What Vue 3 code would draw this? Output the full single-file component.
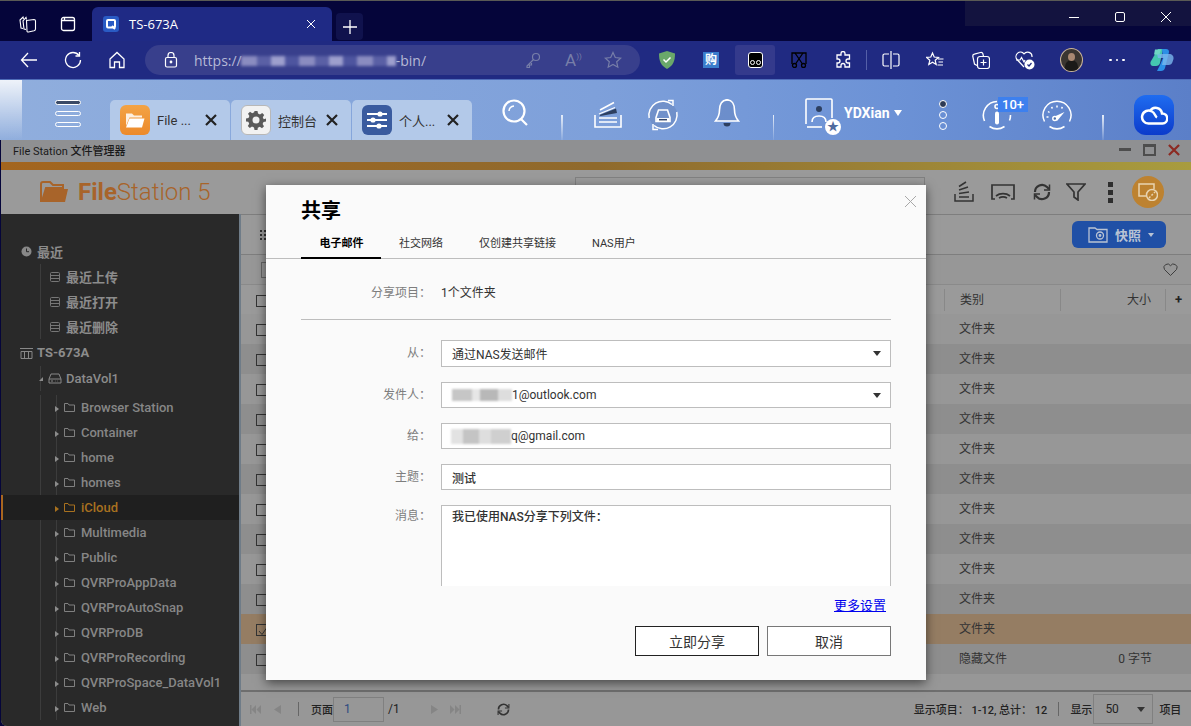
<script setup>
const tree = [
  { label: '最近', kind: 'root', icon: 'clock' },
  { label: '最近上传', kind: 'sub', icon: 'list' },
  { label: '最近打开', kind: 'sub', icon: 'list' },
  { label: '最近删除', kind: 'sub', icon: 'list' },
  { label: 'TS-673A', kind: 'root nas', icon: 'nas' },
  { label: 'DataVol1', kind: 'vol', icon: 'disk' },
]
const folders = ['Browser Station', 'Container', 'home', 'homes', 'iCloud', 'Multimedia', 'Public', 'QVRProAppData', 'QVRProAutoSnap', 'QVRProDB', 'QVRProRecording', 'QVRProSpace_DataVol1', 'Web']
const rows = Array.from({ length: 12 }, (_, i) => ({
  type: i === 11 ? '隐藏文件' : '文件夹',
  size: i === 11 ? '0 字节' : '',
  checked: i === 10,
}))
</script>

<template>
  <div class="screen">
    <!-- browser chrome -->
    <div class="tabstrip">
      <div class="strip-btn">
        <svg width="20" height="20" viewBox="0 0 20 20" fill="none" stroke="#fff" stroke-width="1.100"><path d="M5 14.500 3 14 2 6l3-3 .5 2"/><path d="M8 15.500 6 15 5 7l3-3.500 .5 2"/><path d="M8.500 6.500 16 5.500c1 0 1.500.5 1.500 1.500v8c0 1-.5 1.500-1.500 1.800l-5.500 1.200c-1 .2-1.500-.3-1.500-1z"/></svg>
      </div>
      <div class="strip-btn">
        <svg width="18" height="18" viewBox="0 0 18 18" fill="none" stroke="#fff" stroke-width="1.300"><rect x="2.500" y="2.500" width="13" height="13" rx="2"/><path d="M2.500 5.500h13M5.500 2.500v3"/></svg>
      </div>
      <div class="tab-active">
        <span class="favicon">
          <svg width="12" height="12" viewBox="0 0 12 12" fill="none" stroke="#fff" stroke-width="2"><rect x="2" y="2" width="8" height="7.500" rx="1"/><path d="m7 8 3 3"/></svg>
        </span>
        <span class="tab-title">TS-673A</span>
        <svg class="tab-x" width="10" height="10" viewBox="0 0 10 10" stroke="#fff" stroke-width="1"><path d="m1 1 8 8M9 1l-8 8"/></svg>
      </div>
      <div class="new-tab">
        <svg width="14" height="14" viewBox="0 0 14 14" stroke="#fff" stroke-width="1.300"><path d="M7 0v14M0 7h14"/></svg>
      </div>
      <div class="win-btns">
        <svg width="12" height="12" viewBox="0 0 12 12" stroke="#fff" stroke-width="1"><path d="M1 6.500h10"/></svg>
        <svg width="12" height="12" viewBox="0 0 12 12" fill="none" stroke="#fff" stroke-width="1"><rect x="1.500" y="1.500" width="9" height="9" rx="1.500"/></svg>
        <svg width="12" height="12" viewBox="0 0 12 12" stroke="#fff" stroke-width="1"><path d="m1 1 10 10M11 1 1 11"/></svg>
      </div>
    </div>

    <div class="navbar">
      <div class="nav-btn">
        <svg width="18" height="18" viewBox="0 0 18 18" fill="none" stroke="#fff" stroke-width="1.300"><path d="M17 9H1.500M8 2 1.500 9 8 16"/></svg>
      </div>
      <div class="nav-btn">
        <svg width="18" height="18" viewBox="0 0 18 18" fill="none" stroke="#fff" stroke-width="1.300"><path d="M15 4.500A7.500 7.500 0 1 0 16.500 9"/><path d="M15.500 1v4h-4"/></svg>
      </div>
      <div class="nav-btn">
        <svg width="18" height="18" viewBox="0 0 18 18" fill="none" stroke="#fff" stroke-width="1.300"><path d="M2 8 9 1.500 16 8v8.500h-4.500V11h-5v5.500H2z"/></svg>
      </div>
      <div class="url-pill">
        <svg class="lock" width="14" height="16" viewBox="0 0 14 16" fill="none" stroke="#fff" stroke-width="1.200"><rect x="1.500" y="5.500" width="11" height="9.500" rx="1.500"/><path d="M4 5.500V3.500a3 3 0 0 1 6 0v2"/><circle cx="7" cy="10" r=".8" fill="#fff"/></svg>
        <span class="url">https://</span><span class="url-blur"></span><span class="url">-bin/</span>
        <svg class="pill-a" width="16" height="16" viewBox="0 0 16 16" fill="none" stroke="#777ea8" stroke-width="1.200"><circle cx="11" cy="5" r="3.500"/><path d="M8.500 7.500 2 14v1.500h2.500V13h2v-2"/></svg>
        <span class="read-a">A<sup>))</sup></span>
        <svg class="pill-star" width="18" height="18" viewBox="0 0 18 18" fill="none" stroke="#777ea8" stroke-width="1.200"><path d="m9 1.500 2.300 5 5.400.6-4 3.700 1.100 5.400L9 13.500l-4.800 2.700 1.100-5.400-4-3.700 5.400-.6z"/></svg>
      </div>
      <div class="ext">
        <svg width="16" height="18" viewBox="0 0 16 18"><path d="M8 0 16 2.500c0 7-1.500 12-8 15.500C1.500 14.500 0 9.500 0 2.500z" fill="#6aa86a"/><path d="m4.500 8.500 2.500 2.500 4.500-4.500" stroke="#fff" stroke-width="1.500" fill="none"/></svg>
      </div>
      <div class="ext"><span class="gou">购</span></div>
      <div class="ext ext-active-wrap">
        <div class="ext-active"><span class="tape"><i></i><i></i></span></div>
      </div>
      <div class="ext">
        <svg width="16" height="16" viewBox="0 0 16 16" fill="none" stroke="#000" stroke-width="1.300"><path d="M1 12V1h14v11"/><path d="m4 1 7.500 11M12 1 4.500 12"/><circle cx="3.500" cy="13.500" r="2"/><circle cx="12.500" cy="13.500" r="2"/></svg>
      </div>
      <div class="ext">
        <svg width="18" height="18" viewBox="0 0 18 18" fill="none" stroke="#fff" stroke-width="1.300"><path d="M7 2.500a2 2 0 0 1 4 0V4h4.500v4h-1.500a2 2 0 0 0 0 4h1.500v4H11v-1.500a2 2 0 0 0-4 0V16H3v-4h1a2 2 0 0 0 0-4H3V4h4z"/></svg>
      </div>
      <span class="nav-sep"></span>
      <div class="ext">
        <svg width="18" height="18" viewBox="0 0 18 18" fill="none" stroke="#fff" stroke-width="1.200"><path d="M9 0v18M7 3H2.500A1.500 1.500 0 0 0 1 4.500v9A1.500 1.500 0 0 0 2.500 15H7M11 3h4.500A1.500 1.500 0 0 1 17 4.500v9a1.500 1.500 0 0 1-1.500 1.500H11"/></svg>
      </div>
      <div class="ext">
        <svg width="18" height="18" viewBox="0 0 18 18" fill="none" stroke="#fff" stroke-width="1.200"><path d="m6.500 2 1.700 4 4.300.4-3.300 2.900 1 4.200-3.700-2.300L2.800 13.500l1-4.200L.5 6.400l4.300-.4zM12 8h5.500M12.500 11H17M11.500 14H17"/></svg>
      </div>
      <div class="ext g2">
        <svg width="18" height="18" viewBox="0 0 18 18" fill="none" stroke="#fff" stroke-width="1.200"><rect x="5.500" y="5.500" width="12" height="12" rx="2.500"/><path d="M11.500 8.500v6M8.500 11.500h6M5 14.500 2.500 13 .8 5.500a2 2 0 0 1 1.500-2.300L8.500 1.500a2 2 0 0 1 2.400 1.300l.6 2.700"/></svg>
      </div>
      <div class="ext">
        <svg width="20" height="20" viewBox="0 0 20 20" fill="none" stroke="#fff" stroke-width="1.200"><path d="M9 17 2 9.500A4.500 4.500 0 0 1 9 3.800a4.500 4.500 0 0 1 8 3.200"/><path d="M1 10h4l1.500-2.500L9 12l1-2"/><circle cx="14.500" cy="14.500" r="5" fill="#fff" stroke="none"/><path d="m12.500 14.500 1.500 1.500 2.500-3" stroke="#202a82"/></svg>
      </div>
      <div class="ext g2"><span class="avatar"><i></i></span></div>
      <div class="ext g2"><span class="more"><i></i><i></i><i></i></span></div>
      <div class="ext g1">
        <svg width="24" height="24" viewBox="0 0 24 24"><path d="M8 1h5l-3 14c-.5 2-2 3-4 3H3C1 18 0 16 .5 14z" fill="#45c6b0"/><path d="M12 1h4c2 0 3 1 3 3l-4 16c-.5 2-2 3-4 3H7l3-6 3-7z" fill="#2c8fe6"/><path d="M7 6h12c3 0 5 2 4.500 5l-1 3c-.5 2-2 3-4 3H12l1.500-7H8z" fill="#7ab8ee" opacity=".8"/><path d="M5 1.500h6l-1.500 5H4z" fill="#6fd5c4"/></svg>
      </div>
    </div>

    <!-- QTS desktop bar -->
    <div class="qts">
      <div class="burger"><i class="b1"></i><i></i><i></i></div>
      <div class="qts-tabs">
        <div class="qts-tab">
          <span class="app app-file">
            <svg width="20" height="18" viewBox="0 0 20 18"><path d="M1 2.500h6l2 2h8v2H4.500L1 15z" fill="#fff" opacity=".85"/><path d="M4.500 7.500H19.500L17 16.500H1z" fill="#fff"/></svg>
          </span>
          <span class="qts-tab-text">File ...</span>
          <svg class="qts-x" width="12" height="12" viewBox="0 0 12 12" stroke="#222" stroke-width="2.200"><path d="m1 1 10 10M11 1 1 11"/></svg>
        </div>
        <div class="qts-tab">
          <span class="app app-gear">
            <svg width="20" height="20" viewBox="0 0 20 20"><path d="M8.500 1h3l.5 2.500 2 .9 2.200-1.400 2 2-1.400 2.200.9 2L20 8.500v3l-2.500.5-.9 2 1.400 2.200-2 2-2.200-1.400-2 .9-.3 2.300h-3l-.5-2.500-2-.9-2.200 1.400-2-2 1.400-2.200-.9-2L0 11.500v-3l2.500-.5.9-2L2 3.800l2-2 2.200 1.400 2-.9z" fill="#5a5a5a"/><circle cx="10" cy="10" r="3.500" fill="#f0f0f0"/></svg>
          </span>
          <span class="qts-tab-text">控制台</span>
          <svg class="qts-x" width="12" height="12" viewBox="0 0 12 12" stroke="#222" stroke-width="2.200"><path d="m1 1 10 10M11 1 1 11"/></svg>
        </div>
        <div class="qts-tab">
          <span class="app app-set">
            <svg width="20" height="20" viewBox="0 0 20 20" stroke="#fff" stroke-width="2.200" fill="#fff"><path d="M0 4h20M0 10h20M0 16h20"/><circle cx="13" cy="4" r="1.500"/><circle cx="6" cy="10" r="1.500"/><circle cx="12" cy="16" r="1.500"/></svg>
          </span>
          <span class="qts-tab-text">个人...</span>
          <svg class="qts-x" width="12" height="12" viewBox="0 0 12 12" stroke="#222" stroke-width="2.200"><path d="m1 1 10 10M11 1 1 11"/></svg>
        </div>
      </div>
      <svg class="q-search up" width="28" height="28" viewBox="0 0 28 28" fill="none" stroke="#fff" stroke-width="2.200"><circle cx="13" cy="12" r="10.500"/><path d="m20 20 6 6"/><path d="M8 12a5.500 5.500 0 0 1 5-5" stroke-width="1.500"/></svg>
      <span class="q-sep s1"></span>
      <svg class="q-stack" width="30" height="28" viewBox="0 0 30 28" fill="none" stroke="#fff" stroke-width="1.600"><path d="M2 14v12h26V14"/><path d="M7 9 21 1.500"/><path d="M6.500 14 23 7.500l1 4.500-16.500 3z" fill="#2d3f60" stroke="none"/><path d="M6 13 22 6.500" stroke-width="1.300"/><path d="M6 17h18M6 21h18"/></svg>
      <svg class="q-sync" width="32" height="32" viewBox="0 0 32 32" fill="none" stroke="#fff" stroke-width="1.500"><circle cx="16" cy="16" r="14" fill="#6a87bd" fill-opacity=".55" stroke="none"/><path d="M2.200 19A14 14 0 0 1 25 5.500M29.800 13A14 14 0 0 1 7 26.500"/><path d="M21 1.500h5V7M11 30.500H6V25"/><path d="M9 18.500 11.500 11h9l2.500 7.500v4H9z" stroke-width="1.600"/><path d="M9.500 19h13v3.500h-13z" fill="#fff" stroke="none"/><path d="M12 20.700h8" stroke="#34466a" stroke-width="1.500"/></svg>
      <svg class="q-bell up" width="26" height="30" viewBox="0 0 26 30" fill="none" stroke="#fff" stroke-width="1.600"><path d="M13 2C7.500 2 5.500 7 5.500 12c0 5-1.500 8-4 11h23c-2.500-3-4-6-4-11 0-5-2-10-7.500-10z" fill="#5e7eb9" fill-opacity=".4"/><path d="M11.500 1.800h3"/><path d="M9.500 25a3.500 3.500 0 0 0 7 0z" fill="#2d3f60" stroke="none"/></svg>
      <span class="q-sep s2"></span>
      <div class="q-user up">
        <svg width="28" height="30" viewBox="0 0 28 30" fill="none" stroke="#fff" stroke-width="1.600"><path d="M1 26V2a1 1 0 0 1 1-1h24a1 1 0 0 1 1 1v18" /><circle cx="14" cy="11" r="3" fill="#2d3f60" stroke="none"/><path d="M7 24c0-4 3-6 7-6s7 2 7 6"/><path d="M2 29h15"/></svg>
        <span class="star-badge">★</span>
      </div>
      <div class="q-name up"><b>YDXian</b><i></i></div>
      <div class="q-dots"><i class="on"></i><i></i><i></i></div>
      <div class="q-info">
        <svg width="30" height="30" viewBox="0 0 30 30" fill="none" stroke="#fff" stroke-width="1.600"><path d="M2.500 21A14 14 0 0 1 15 1.500"/><path d="M7.500 26.500a14 14 0 0 0 15 0"/><path d="M28.500 15a14 14 0 0 1-1 5.500"/><rect x="13" y="11.500" width="4" height="13" rx="2" fill="#fff" stroke="none"/><circle cx="15" cy="6.500" r="2" fill="none"/></svg>
        <span class="badge">10+</span>
      </div>
      <svg class="q-gauge" width="30" height="30" viewBox="0 0 30 30" fill="none" stroke="#fff" stroke-width="1.500"><path d="M2.500 21.500A14 14 0 1 1 27.500 21.500"/><path d="M7.500 26.500a14 14 0 0 0 15 0"/><path d="m11.500 17 11-5-7.500 9z" fill="#fff" stroke="none"/><circle cx="12.800" cy="18.500" r="2" fill="#4f6fa8" stroke="#fff"/><path d="M15 5.500v2M9.500 7l1 1.500M20.500 7l-1 1.500M6 11.500l1.500 1M4.500 17h2"/></svg>
      <span class="q-sep s3"></span>
      <div class="q-cloud">
        <svg width="28" height="22" viewBox="0 0 28 22" fill="none" stroke="#fff" stroke-width="2.500"><path d="M10 7a6.500 6.500 0 0 1 12 2.500 5 5 0 0 1 .5 10H9a6.500 6.500 0 1 1 3-12c3 1.500 3 5 5 6"/></svg>
      </div>
    </div>

    <!-- File Station window, dimmed -->
    <div class="win">
      <div class="win-title">
        <span>File Station <b>文件管理器</b></span>
        <div class="win-ctrl">
          <i class="c-min"></i><i class="c-max"></i>
          <svg width="12" height="12" viewBox="0 0 13 13" stroke="#8c2a22" stroke-width="2.400"><path d="m1 1 11 11M12 1 1 12"/></svg>
        </div>
      </div>
      <div class="win-strip"></div>
      <div class="win-head">
        <svg class="fs-logo" width="29" height="22" viewBox="0 0 29 22"><path d="M1 20V3a2 2 0 0 1 2-2h7l3 3h10v3H6L2 20z" fill="none" stroke="#a8642a" stroke-width="2"/><path d="M6 8h22l-3 13H2z" fill="#a8642a"/></svg>
        <div class="fs-name"><b>File</b>Station 5</div>
        <div class="fs-search"></div>
        <svg class="h1" width="22" height="22" viewBox="0 0 22 22" fill="none" stroke="#333" stroke-width="1.500"><path d="M2 13v7h18v-7M6 16h10M6 12.500l10-1.500M6 9l9-3M6 5.500 13 1"/></svg>
        <svg class="h2" width="24" height="16" viewBox="0 0 24 16" fill="none" stroke="#333" stroke-width="1.700"><path d="M4 15H1V1h22v14h-3"/><path d="M5 12a10 8 0 0 1 14 0M8 14a6 4 0 0 1 8 0"/></svg>
        <svg class="h3" width="18" height="18" viewBox="0 0 18 18" fill="none" stroke="#333" stroke-width="2.200"><path d="M2 9a7 7 0 0 1 12-5l2 2M16 9a7 7 0 0 1-12 5l-2-2"/><path d="M16.500 1.500V7H11M1.500 16.500V11H7" stroke-width="1.500"/></svg>
        <svg class="h4" width="20" height="18" viewBox="0 0 20 18" fill="none" stroke="#333" stroke-width="1.700"><path d="M1 1h18l-7 8v8l-4-3V9z"/></svg>
        <div class="h5"><i></i><i></i><i></i></div>
        <div class="h6">
          <svg width="20" height="18" viewBox="0 0 20 18" fill="none" stroke="#e8d3b0" stroke-width="1.500"><path d="M8 13H1V1h15v5"/><circle cx="14" cy="12" r="5.500"/><path d="m11 15 6-6" stroke-dasharray="2 1.500"/></svg>
        </div>
      </div>

      <div class="win-body">
        <aside class="side">
          <div v-for="n in tree" :key="n.label" class="node" :class="n.kind">
            <i v-if="n.kind === 'vol'" class="tri tri-open"></i>
            <svg v-if="n.icon === 'clock'" class="n-ic" width="13" height="13" viewBox="0 0 13 13"><circle cx="6.500" cy="6.500" r="5" fill="#888"/><path d="M6.500 3.500v3.200h2.500" stroke="#292929" fill="none"/></svg>
            <svg v-if="n.icon === 'list'" class="n-ic" width="10" height="10" viewBox="0 0 10 10" fill="none" stroke="#777"><rect x=".5" y=".5" width="9" height="9" rx="1"/><path d="M.5 3.500h9M.5 6.500h9"/></svg>
            <svg v-if="n.icon === 'nas'" class="n-ic" width="13" height="12" viewBox="0 0 13 12" fill="none" stroke="#888"><path d="M0 1.500h13M1 4.500h11v7H1zM4.500 4.500v7M8.500 4.500v7"/></svg>
            <svg v-if="n.icon === 'disk'" class="n-ic" width="14" height="11" viewBox="0 0 14 11" fill="none" stroke="#888"><path d="M1 6 3 1h8l2 5v4H1zM1 6h12M3 8h2M7 8h.500M9 8h.500"/></svg>
            <span>{{ n.label }}</span>
          </div>
          <div class="folders">
            <div v-for="f in folders" :key="f" class="node folder" :class="{ cur: f === 'iCloud' }">
              <i class="tri"></i>
              <svg class="n-ic" width="11" height="9" viewBox="0 0 11 9" fill="none" stroke="currentColor"><path d="M.5.500h3.500l1 1.500h5.500v6.500H.5z"/></svg>
              <span>{{ f }}</span>
            </div>
          </div>
        </aside>

        <main class="main">
          <div class="tool1">
            <div class="grip"><i v-for="d in 9" :key="d"></i></div>
            <div class="snap">
              <svg width="20" height="16" viewBox="0 0 20 16" fill="none" stroke="#b9c3d4" stroke-width="1.300"><path d="M1 15V1h6l2 1.500h10V15z"/><circle cx="12" cy="8.500" r="3.500"/><circle cx="12" cy="8.500" r=".8" fill="#b9c3d4"/></svg>
              <span>快照</span><i></i>
            </div>
          </div>
          <div class="tool2">
            <span class="small-box"></span>
            <svg class="heart" width="15" height="13" viewBox="0 0 15 13" fill="none" stroke="#3e3e3e"><path d="M7.500 12.500 1.500 6.500a3.400 3.400 0 0 1 6-3.800 3.400 3.400 0 0 1 6 3.800z"/></svg>
          </div>
          <div class="thead">
            <span class="cb"></span>
            <span class="th-type">类别</span>
            <span class="th-size">大小</span>
            <span class="th-plus">+</span>
          </div>
          <div class="tbody">
            <div v-for="(r, i) in rows" :key="i" class="row" :class="{ checked: r.checked, even: i % 2 === 1 }">
              <span class="cb">
                <svg v-if="r.checked" width="12" height="12" viewBox="0 0 12 12" fill="none" stroke="#333"><path d="m2 6 3 3.500L11 1"/></svg>
              </span>
              <span class="td-type">{{ r.type }}</span>
              <span class="td-size">{{ r.size }}</span>
            </div>
          </div>
          <div class="pager">
            <svg width="11" height="9" viewBox="0 0 11 9" fill="#858585"><path d="M0 0h1.500v9H0zM6 0v9L1.500 4.500zM11 0v9L6.500 4.500z"/></svg>
            <svg class="pg-prev" width="7" height="9" viewBox="0 0 7 9" fill="#858585"><path d="M7 0v9L0 4.500z"/></svg>
            <span class="pg-sep"></span>
            <span class="pg-label">页面</span>
            <span class="pg-input">1</span>
            <span class="pg-total">/1</span>
            <svg class="pg-next" width="7" height="9" viewBox="0 0 7 9" fill="#858585"><path d="M0 0v9l7-4.500z"/></svg>
            <svg class="pg-last" width="11" height="9" viewBox="0 0 11 9" fill="#858585"><path d="M11 0H9.500v9H11zM5 0v9l4.500-4.500zM0 0v9l4.500-4.500z"/></svg>
            <svg class="pg-ref" width="13" height="13" viewBox="0 0 18 18" fill="none" stroke="#333" stroke-width="2.200"><path d="M2 9a7 7 0 0 1 12-5l2 2M16 9a7 7 0 0 1-12 5l-2-2"/><path d="M16.500 1.500V7H11M1.500 16.500V11H7" stroke-width="1.500"/></svg>
            <span class="pg-info">显示项目： 1-12, 总计： 12</span>
            <span class="pg-sep s-c"></span>
            <span class="pg-show">显示</span>
            <span class="pg-select">50<i></i></span>
            <span class="pg-unit">项目</span>
          </div>
        </main>
      </div>
    </div>

    <!-- share dialog -->
    <div class="dialog">
      <svg class="dlg-x" width="13" height="13" viewBox="0 0 13 13" stroke="#a8a8a8"><path d="m1 1 11 11M12 1 1 12"/></svg>
      <h1 class="dlg-title">共享</h1>
      <div class="dlg-tabs">
        <span class="dlg-tab on">电子邮件</span>
        <span class="dlg-tab">社交网络</span>
        <span class="dlg-tab">仅创建共享链接</span>
        <span class="dlg-tab">NAS用户</span>
      </div>
      <div class="dlg-body">
        <div class="f-row f-static">
          <label>分享项目：</label>
          <span class="f-val">1个文件夹</span>
        </div>
        <div class="f-hr"></div>
        <div class="f-row">
          <label>从：</label>
          <div class="ctl first">通过NAS发送邮件<i class="arrow"></i></div>
        </div>
        <div class="f-row">
          <label>发件人：</label>
          <div class="ctl"><span class="blur b-a"></span><span class="mail">1@outlook.com</span><i class="arrow"></i></div>
        </div>
        <div class="f-row">
          <label>给：</label>
          <div class="ctl"><span class="blur b-b"></span><span class="mail">q@gmail.com</span></div>
        </div>
        <div class="f-row">
          <label>主题：</label>
          <div class="ctl strong">测试</div>
        </div>
        <div class="f-row">
          <label class="top">消息：</label>
          <div class="ctl area strong">我已使用NAS分享下列文件：</div>
        </div>
      </div>
      <div class="dlg-foot">
        <a class="more-link">更多设置</a>
        <div class="dlg-btns">
          <button class="btn primary">立即分享</button>
          <button class="btn">取消</button>
        </div>
      </div>
    </div>
  </div>
</template>

<style>
html, body { margin: 0; background: #05053a; }
</style>

<style scoped>
.screen {
  position: relative;
  width: 1191px;
  height: 726px;
  overflow: hidden;
  display: flex;
  flex-direction: column;
  font-family: Roboto, "Noto Sans CJK SC", sans-serif;
  font-size: 12px;
  color: #333;
}
i { display: block; font-style: normal; }

/* tab strip */
.tabstrip {
  height: 41px;
  flex: none;
  display: flex;
  align-items: flex-end;
  padding-left: 8px;
  box-sizing: border-box;
  background: #05053a;
  border-top: 1px solid #5a5a55;
}
.strip-btn { width: 40px; height: 34px; display: flex; align-items: center; justify-content: center; color: #fff; }
.tab-active {
  margin-left: 4px;
  width: 240px;
  height: 34px;
  box-sizing: border-box;
  padding: 0 11px;
  border-radius: 6px 6px 0 0;
  background: #1f2a85;
  display: flex;
  align-items: center;
  color: #fff;
}
.favicon { width: 16px; height: 16px; border-radius: 3px; background: #2a5bc4; display: flex; align-items: center; justify-content: center; }
.tab-title { margin-left: 10px; font-size: 13px; font-family: "Open Sans", sans-serif; flex: 1; }
.tab-x { margin-right: 5px; }
.new-tab {
  width: 27px; height: 27px; margin: 0 0 1px 4px;
  background: #10124d; border-radius: 4px; display: flex; align-items: center; justify-content: center;
}
.win-btns {
  margin-left: auto; width: 226px; height: 25px; align-self: flex-start;
  display: flex; align-items: center; justify-content: flex-end;
  padding: 7px 2px 0 0; box-sizing: border-box; background: #13133f;
}
.win-btns svg { margin: 0 17px; flex: none; }

/* nav */
.navbar {
  height: 39px;
  flex: none;
  display: flex;
  align-items: center;
  padding-left: 7px;
  background: #202a82;
  border-bottom: 1px solid #4f6cb8;
  box-sizing: border-box;
}
.nav-btn { width: 44px; display: flex; justify-content: center; }
.url-pill {
  margin-left: 6px;
  width: 495px;
  height: 30px;
  border-radius: 15px;
  background: #383f8c;
  display: flex;
  align-items: center;
  padding-left: 19px;
  box-sizing: border-box;
}
.lock { margin-right: 16px; }
.url { color: #b6b9d6; font-size: 14px; font-family: "Open Sans", sans-serif; }
.url-blur {
  width: 155px; height: 10px; margin: 2px 0 0 -1px;
  background: repeating-linear-gradient(90deg, #8a8cc0 0 16px, #5a60a5 16px 30px, #9d9fcd 30px 44px, #4e559f 44px 58px);
  filter: blur(1.500px);
}
.pill-a { margin-left: 99px; flex: none; }
.read-a { margin-left: 24px; width: 22px; color: #777ea8; font-size: 17px; flex: none; }
.read-a sup { font-size: 8px; }
.pill-star { margin-left: 17px; flex: none; }
.ext { width: 44px; height: 30px; display: flex; align-items: center; justify-content: center; flex: none; }
.url-pill + .ext { margin-left: 5px; }
.g1 { margin-left: 1px; }
.g2 { margin-left: 2px; }
.ext-active { width: 40px; height: 30px; display: flex; align-items: center; justify-content: center; background: #343a8c; border-radius: 3px; }
.gou { width: 16px; height: 16px; background: #3a7ccc; color: #fff; font-size: 12px; line-height: 16px; text-align: center; font-weight: 700; }
.tape { width: 15px; height: 16px; background: #000; border: 1px solid #fff; border-radius: 3px; display: flex; align-items: flex-end; justify-content: center; gap: 1px; padding-bottom: 2px; box-sizing: border-box; }
.tape i { width: 5px; height: 5px; border-radius: 50%; border: 1px solid #fff; box-sizing: border-box; }
.nav-sep { width: 1px; height: 20px; background: #5560a8; margin: 0 2px 0 1px; flex: none; }
.avatar { width: 23px; height: 24px; border-radius: 50%; background: #3a3530; border: 1px solid #c9b49c; box-sizing: border-box; overflow: hidden; display: block; }
.avatar i { width: 7px; height: 8px; margin: 4px 0 0 7px; border-radius: 50%; background: #a98872; box-shadow: 0 10px 0 3px #1b1a18; }
.more { display: flex; gap: 4px; }
.more i { width: 2.500px; height: 2.500px; background: #fff; border-radius: 50%; }

/* QTS bar */
.qts {
  height: 60px;
  flex: none;
  display: flex;
  align-items: center;
  padding-top: 9px;
  box-sizing: border-box;
  padding-left: 55px;
  background:
    linear-gradient(rgba(255,255,255,.85), rgba(255,255,255,0)) 0 0 / 22px 100% no-repeat,
    linear-gradient(90deg, #90aedd 0%, #7ea0da 50%, #6c92d6 75%, #5b7fc8 100%);
}
.up { margin-top: -3px; }
.burger { width: 26px; display: flex; flex-direction: column; gap: 6px; flex: none; margin-top: -3px; }
.burger i { height: 5px; border: 1.500px solid #fff; border-radius: 3px; box-sizing: border-box; }
.burger .b1 { background: #3a4a66; }
.qts-tabs { margin-left: 29px; display: flex; gap: 1px; align-self: flex-end; flex: none; }
.qts-tab {
  width: 120px; height: 40px; padding: 0 10px; box-sizing: border-box;
  background: #b3c9e9; border-radius: 5px 5px 0 0;
  display: flex; align-items: center;
}
.app { width: 30px; height: 30px; border-radius: 6px; display: flex; align-items: center; justify-content: center; flex: none; }
.app-file { background: linear-gradient(#f3a344, #ec8a2c); }
.app-gear { background: #f2f2f2; border: 1px solid #b8b8b8; box-sizing: border-box; }
.app-set { background: #3a5b9f; }
.qts-tab-text { margin-left: 7px; flex: 1; font-size: 13px; color: #333; white-space: nowrap; }
.qts-x { flex: none; margin-right: 3px; }
.q-search { margin-left: 29px; flex: none; }
.q-sep { width: 1.500px; height: 25px; background: linear-gradient(#e6edf8, rgba(230,237,248,.1)); flex: none; align-self: flex-end; }
.s1 { margin-left: 32px; }
.q-stack { margin-left: 30px; flex: none; }
.q-sync { margin-left: 24px; flex: none; }
.q-bell { margin-left: 35px; flex: none; }
.s2 { margin-left: 33px; }
.q-user { position: relative; margin-left: 31px; width: 28px; height: 30px; flex: none; }
.star-badge {
  position: absolute; right: -8px; bottom: -7px; width: 16px; height: 16px; border-radius: 50%;
  background: #fff; color: #4f6b9f; font-size: 12px; line-height: 16px; text-align: center;
}
.q-name { margin-left: 11px; width: 61px; display: flex; align-items: center; flex: none; color: #fff; font-size: 14px; }
.q-name i { margin-left: 4px; width: 0; height: 0; border: 4px solid transparent; border-top: 6px solid #fff; border-bottom: 0; }
.q-dots { margin-left: 34px; width: 8px; display: flex; flex-direction: column; gap: 3px; flex: none; }
.q-dots i { width: 8px; height: 8px; border: 1.500px solid #fff; border-radius: 50%; box-sizing: border-box; }
.q-dots .on { background: #2d3a55; }
.q-info { position: relative; margin-left: 35px; width: 30px; height: 30px; flex: none; }
.badge {
  position: absolute; left: 16px; top: -3px; width: 30px; height: 15px;
  background: #3d80ee; color: #fff; font-size: 13px; font-weight: 500; line-height: 15px; text-align: center;
}
.q-gauge { margin-left: 30px; flex: none; }
.s3 { margin-left: 30px; }
.q-cloud {
  margin-left: 30px; width: 40px; height: 40px; border-radius: 12px; flex: none;
  background: linear-gradient(#1f6cf0, #0b3bcb);
  display: flex; align-items: center; justify-content: center;
}

/* window */
.win { flex: 1; display: flex; flex-direction: column; min-height: 0; margin-left: 1px; background: #989898; border-radius: 0 0 6px 6px; }
.win-title {
  height: 22px; flex: none; box-sizing: border-box;
  background: #8f9092;
  display: flex; align-items: center; padding: 0 11px 3px 12px;
  color: #1a1a1a; font-size: 11px;
}
.win-title b { font-weight: 500; }
.win-ctrl { margin-left: auto; display: flex; align-items: center; gap: 12px; }
.c-min { width: 12px; height: 3px; background: #4d4d4d; }
.c-max { width: 9px; height: 7px; border: 2px solid #4d4d4d; border-top-width: 3px; }
.win-strip { height: 8px; flex: none; background: linear-gradient(90deg, #a3651f, #8f6a2d 50%, #a89c3f); }
.win-head { height: 44px; flex: none; display: flex; align-items: center; background: #9a9a9a; padding-left: 39px; box-sizing: border-box; }
.fs-logo { flex: none; }
.fs-name { margin-left: 9px; width: 138px; font-size: 24px; font-weight: 300; color: #a8642a; white-space: nowrap; }
.fs-name b { font-weight: 700; }
.fs-search { margin-left: 359px; width: 350px; height: 28px; margin-top: -3px; border: 1px solid #808080; box-sizing: border-box; flex: none; }
.h1 { margin-left: 28px; flex: none; }
.h2 { margin-left: 16px; flex: none; }
.h3 { margin-left: 18px; flex: none; }
.h4 { margin-left: 15px; flex: none; }
.h5 { margin-left: 22px; width: 5px; display: flex; flex-direction: column; gap: 3px; flex: none; }
.h5 i { width: 5px; height: 5px; background: #2e2e2e; }
.h6 { margin-left: 19px; width: 32px; height: 32px; border-radius: 50%; background: #bd8230; display: flex; align-items: center; justify-content: center; flex: none; }

.win-body { flex: 1; display: flex; min-height: 0; }
.side { width: 238px; flex: none; background: #292929; padding-top: 25px; box-sizing: border-box; overflow: hidden; position: relative; border-bottom-left-radius: 6px; }
.node { height: 25px; display: flex; align-items: center; color: #8c8c8c; font-size: 13px; font-weight: 700; white-space: nowrap; box-sizing: border-box; }
.node.root { padding-left: 19px; gap: 4px; }
.node.root .n-ic { width: 13px; }
.node.nas { margin-top: 1px; }
.node.sub { gap: 6px; border-left: 1px solid #3c3c3c; margin-left: 39px; padding-left: 9px; }
.node.vol { margin: 1px 0 0 39px; border-left: 1px solid #3c3c3c; padding-left: 0; font-weight: 500; }
.node.vol .n-ic { margin: 0 4px 0 5px; flex: none; }
.tri { width: 0; height: 0; border: 3px solid transparent; border-left: 4px solid #8c8c8c; border-right: 0; flex: none; }
.tri-open { border: 0; width: 0; height: 0; border-bottom: 4px solid #8c8c8c; border-left: 4px solid transparent; margin-left: -2px; }
.folders { margin: 4px 0 0 39px; border-left: 1px solid #3c3c3c; position: relative; }
.folders::before { content: ""; position: absolute; left: 15px; top: 0; bottom: 0; width: 1px; background: #3c3c3c; }
.folder { position: relative; padding-left: 14px; font-weight: 500; color: #868686; }
.folder .tri { margin-top: 2px; }
.folder .n-ic { margin: 0 6px 0 5px; color: #808080; }
.folder.cur { background: #1f1f1f; color: #a8711f; margin-left: -40px; padding-left: 54px; box-shadow: inset 2px 0 0 #a8661f; }
.folder.cur .n-ic { color: #a8711f; }
.folder.cur .tri { border-left-color: #a8711f; }

.main { flex: 1; min-width: 0; display: flex; flex-direction: column; border-left: 2px solid #6f7c88; background: #979797; }
.tool1 { height: 41px; flex: none; display: flex; align-items: center; padding: 0 25px 0 19px; justify-content: space-between; border-top: 1px solid #7e7e7e; border-bottom: 1px solid #7e7e7e; box-sizing: border-box; background: #9a9a9a; }
.grip { display: grid; grid-template-columns: 2px 2px 2px; gap: 2px; }
.grip i { width: 2px; height: 2px; background: #333; }
.snap { width: 94px; height: 27px; border-radius: 6px; background: #2050a6; display: flex; align-items: center; padding-left: 16px; box-sizing: border-box; color: #b9c3d4; font-size: 13px; font-weight: 700; gap: 7px; }
.snap i { width: 0; height: 0; border: 3px solid transparent; border-top: 4px solid #b9c3d4; border-bottom: 0; }
.tool2 { height: 30px; flex: none; display: flex; align-items: center; justify-content: space-between; padding: 0 13px 0 20px; border-bottom: 1px solid #8a8a8a; box-sizing: border-box; }
.small-box { width: 8px; height: 14px; border: 1px solid #666; }
.thead { height: 29px; flex: none; display: flex; align-items: center; padding-left: 15px; background: #9a9a9a; box-sizing: border-box; color: #333; }
.cb { width: 12px; height: 12px; margin-top: 2px; border: 1px solid #333; flex: none; display: block; box-sizing: border-box; overflow: visible; }
.th-type { margin-left: 676px; padding-left: 15px; width: 116px; box-sizing: border-box; border-left: 1px solid #888; height: 22px; line-height: 22px; }
.th-size { width: 105px; padding-right: 14px; box-sizing: border-box; text-align: right; border-left: 1px solid #888; height: 22px; line-height: 22px; }
.th-plus { width: 25px; text-align: center; border-left: 1px solid #888; height: 22px; line-height: 22px; font-weight: 700; color: #222; font-size: 13px; }
.tbody { flex: 1; min-height: 0; }
.row { height: 30px; display: flex; align-items: center; padding-left: 15px; background: #979797; box-sizing: border-box; }
.row.even { background: #8e8e8e; }
.row.checked { background: #957d63; }
.td-type { margin-left: 691px; width: 100px; color: #333; margin-bottom: 3px; }
.td-size { width: 93px; text-align: right; color: #333; margin-bottom: 3px; }
.pager { height: 36px; flex: none; border-top: 2px solid #6e6e6e; box-sizing: border-box; display: flex; align-items: center; padding-left: 9px; color: #222; font-size: 11px; font-weight: 500; background: #979797; }
.pg-prev { margin-left: 13px; }
.pg-sep { width: 1px; height: 14px; background: #666; margin-left: 17px; }
.pg-label { margin-left: 12px; }
.pg-input { width: 51px; height: 25px; border: 1px solid #808080; box-sizing: border-box; line-height: 23px; padding-left: 10px; color: #2e4a80; font-size: 12px; font-weight: 400; }
.pg-total { margin-left: 4px; font-size: 12px; font-weight: 400; }
.pg-next { margin-left: 31px; }
.pg-last { margin-left: 12px; }
.pg-ref { margin-left: 36px; }
.pg-info { margin-left: 404px; white-space: nowrap; }
.s-c { margin-left: 11px; }
.pg-show { margin-left: 11px; }
.pg-select { width: 60px; height: 30px; border: 1px solid #808080; box-sizing: border-box; display: flex; align-items: center; justify-content: space-between; padding: 0 7px 0 11px; font-size: 12px; font-weight: 400; margin-left: 1px; }
.pg-select i { width: 0; height: 0; border: 4px solid transparent; border-top: 5px solid #333; border-bottom: 0; }
.pg-unit { margin-left: 6px; }

/* dialog */
.dialog {
  position: absolute;
  left: 266px; top: 185px;
  width: 660px; height: 495px;
  background: #fafafa;
  box-shadow: 0 3px 10px rgba(0, 0, 0, .55);
  display: flex;
  flex-direction: column;
}
.dlg-x { position: absolute; right: 9px; top: 10px; }
.dlg-title { margin: 14px 0 0 35px; height: 24px; font-size: 20px; line-height: 24px; font-weight: 700; color: #000; }
.dlg-tabs { margin-top: 10px; height: 25px; flex: none; display: flex; padding-left: 35px; border-bottom: 1px solid #bdbdbd; }
.dlg-tab { padding: 3px 18px 0; font-size: 11px; color: #333; line-height: 16px; white-space: nowrap; }
.dlg-tab.on { padding: 3px 18.500px 0; width: 43px; color: #000; font-weight: 700; border-bottom: 2px solid #000; height: 21px; }
.dlg-body { height: 327px; flex: none; overflow: hidden; padding: 24px 35px 0; box-sizing: border-box; display: flex; flex-direction: column; gap: 15px; }
.f-row { display: flex; flex: none; }
.f-row label { width: 140px; flex: none; text-align: right; padding-right: 10px; box-sizing: border-box; color: #7d7d7d; line-height: 26px; font-size: 12px; }
.f-row label.top { line-height: 22px; }
.f-static { height: 20px; line-height: 20px; }
.f-static label { line-height: 20px; }
.f-val { color: #333; }
.f-hr { height: 1px; background: #bdbdbd; margin: 1px 0 5px; flex: none; }
.ctl {
  position: relative;
  width: 450px; height: 26px; flex: none;
  border: 1px solid #bdbdbd; background: #fff; box-sizing: border-box;
  display: flex; align-items: center; padding-left: 10px; color: #333; font-size: 12px;
}
.ctl.first { height: 27px; }
.ctl.strong { font-weight: 500; }
.ctl.area { height: 120px; align-items: flex-start; padding-top: 3px; line-height: 16px; }
.arrow { position: absolute; right: 9px; top: 10px; width: 0; height: 0; border: 4px solid transparent; border-top: 5px solid #333; border-bottom: 0; }
.blur { height: 12px; flex: none; filter: blur(1px); }
.b-a { width: 60px; background: repeating-linear-gradient(90deg, #c6c6c6 0 20px, #e6e6e6 20px 28px, #b8b8b8 28px 46px, #ddd 46px 60px); }
.b-b { width: 60px; height: 15px; margin-left: -1px; background: repeating-linear-gradient(90deg, #e2e2e2 0 12px, #c4c4c4 12px 28px, #dedede 28px 40px, #cfcfcf 40px 60px); }
.mail { font-size: 12px; }
.dlg-foot { flex: 1; display: flex; flex-direction: column; align-items: flex-end; padding: 12px 35px 0 0; }
.more-link { font-size: 13px; line-height: 16px; color: #0000ee; text-decoration: underline; margin-right: 5px; }
.dlg-btns { margin-top: 12px; display: flex; gap: 8px; }
.btn { width: 124px; height: 30px; background: #fff; border: 1px solid #777; font: inherit; font-size: 14px; color: #333; padding: 0; }
.btn.primary { border-color: #222; }
</style>
